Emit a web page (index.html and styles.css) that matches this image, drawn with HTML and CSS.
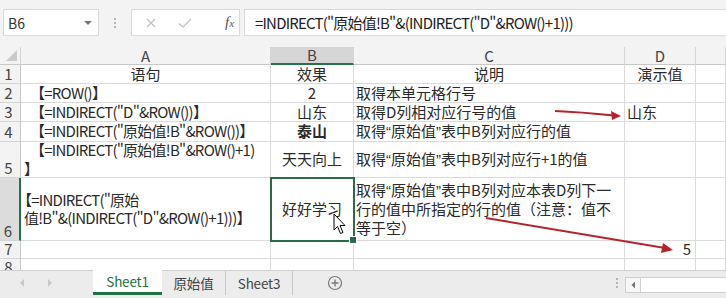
FILE: index.html
```html
<!DOCTYPE html>
<html lang="zh-CN">
<head>
    <meta charset="UTF-8">
    <meta name="viewport" content="width=device-width, initial-scale=1.0">
    <title>INDIRECT</title>

    <link rel="stylesheet" href="styles.css">

</head>

<body>

    <div class="app">

        <div class="toolbar">
            <div class="namebox">
                <span>B6</span>
                <span class="caret"></span>
            </div>
            <div class="grip"><i></i><i></i><i></i></div>
            <div class="fnbox">
                <svg class="ico" width="12" height="12" viewBox="0 0 12 12"><path d="M2 2 L10 10 M10 2 L2 10" stroke="#c4c4c4" stroke-width="1.4" fill="none"/></svg>
                <svg class="ico" width="16" height="12" viewBox="0 0 16 12"><path d="M2 6.5 L6 10 L14 2" stroke="#c4c4c4" stroke-width="1.4" fill="none"/></svg>
                <span class="fx">f<small>x</small></span>
            </div>
            <div class="formula">=INDIRECT("原始值!B"&amp;(INDIRECT("D"&amp;ROW()+1)))</div>
        </div>

        <div class="sheet">
            <!-- column headers -->
            <div class="hd corner"><span class="tri"></span></div>
            <div class="hd">A</div>
            <div class="hd on">B</div>
            <div class="hd">C</div>
            <div class="hd">D</div>
            <div class="hd"></div>

            <!-- row 1 -->
            <div class="rn">1</div>
            <div class="c mid">语句</div>
            <div class="c mid">效果</div>
            <div class="c mid">说明</div>
            <div class="c mid">演示值</div>
            <div class="c"></div>

            <!-- row 2 -->
            <div class="rn">2</div>
            <div class="c a"><span class="t">【=ROW()】</span></div>
            <div class="c mid">2</div>
            <div class="c">取得本单元格行号</div>
            <div class="c"></div>
            <div class="c"></div>

            <!-- row 3 -->
            <div class="rn">3</div>
            <div class="c a"><span class="t">【=INDIRECT("D"&amp;ROW())】</span></div>
            <div class="c mid">山东</div>
            <div class="c">取得D列相对应行号的值</div>
            <div class="c">山东</div>
            <div class="c"></div>

            <!-- row 4 -->
            <div class="rn">4</div>
            <div class="c a"><span class="t">【=INDIRECT("原始值!B"&amp;ROW())】</span></div>
            <div class="c mid bold">泰山</div>
            <div class="c"><span class="t">取得<span class="q">“</span>原始值<span class="q">”</span>表中B列对应行的值</span></div>
            <div class="c"></div>
            <div class="c"></div>

            <!-- row 5 -->
            <div class="rn">5</div>
            <div class="c a"><span class="t">【=INDIRECT("原始值!B"&amp;ROW()+1)<br>】</span></div>
            <div class="c mid">天天向上</div>
            <div class="c"><span class="t">取得<span class="q">“</span>原始值<span class="q">”</span>表中B列对应行+1的值</span></div>
            <div class="c"></div>
            <div class="c"></div>

            <!-- row 6 -->
            <div class="rn on">6</div>
            <div class="c a a6"><span class="t">【=INDIRECT("原始<br>值!B"&amp;(INDIRECT("D"&amp;ROW()+1)))】</span></div>
            <div class="c mid sel">好好学习</div>
            <div class="c"><span class="t">取得<span class="q">“</span>原始值<span class="q">”</span>表中B列对应本表D列下一<br>行的值中所指定的行的值（注意：值不<br>等于空）</span></div>
            <div class="c"></div>
            <div class="c"></div>

            <!-- row 7 -->
            <div class="rn">7</div>
            <div class="c"></div>
            <div class="c"></div>
            <div class="c"></div>
            <div class="c right">5</div>
            <div class="c"></div>

            <!-- row 8 -->
            <div class="rn">8</div>
            <div class="c"></div>
            <div class="c"></div>
            <div class="c"></div>
            <div class="c"></div>
            <div class="c"></div>
        </div>

        <div class="tabs">
            <div class="nav">
                <svg width="8" height="10" viewBox="0 0 8 10"><path d="M6 1 L2 5 L6 9 Z" fill="#c8c8c8"/></svg>
                <svg width="8" height="10" viewBox="0 0 8 10"><path d="M2 1 L6 5 L2 9 Z" fill="#c8c8c8"/></svg>
            </div>
            <div class="tab active">Sheet1</div>
            <div class="tab">原始值</div>
            <div class="tab">Sheet3</div>
            <div class="add">
                <svg width="16" height="16" viewBox="0 0 16 16"><circle cx="8" cy="8" r="6.5" stroke="#7a7a7a" stroke-width="1.2" fill="none"/><path d="M8 4.5 V11.5 M4.5 8 H11.5" stroke="#7a7a7a" stroke-width="1.4"/></svg>
            </div>
            <div class="spacer"></div>
            <div class="grip small"><i></i><i></i><i></i></div>
            <div class="hscroll">
                <div class="sbtn"><svg width="8" height="10" viewBox="0 0 8 10"><path d="M6 1.5 L2.5 5 L6 8.5 Z" fill="#777"/></svg></div>
                <div class="track"></div>
            </div>
        </div>

        <!-- hand drawn annotations -->
        <svg class="marks" width="726" height="298" viewBox="0 0 726 298">
            <path d="M555 111 Q580 112 614 115.5" stroke="#b5242b" stroke-width="2" fill="none"/>
            <path d="M621 116 L611 111 L612 120 Z" fill="#b5242b"/>
            <path d="M486 218 L665 248" stroke="#b5242b" stroke-width="2" fill="none"/>
            <path d="M673 250 L663 243 L661 253 Z" fill="#b5242b"/>
        </svg>

        <svg class="pointer" width="14" height="22" viewBox="0 0 14 22">
            <path d="M1 1 L1 17 L4.5 13.5 L7.5 20.5 L10 19.5 L7 12.5 L12 12.5 Z" fill="#fff" stroke="#000" stroke-width="1" stroke-linejoin="round"/>
        </svg>

    </div>

</body>

</html>
```

FILE: styles.css
```css
*, html {
    box-sizing: border-box;
    margin: 0;
    padding: 0;
}

body {
    width: 726px;
    height: 298px;
    overflow: hidden;
    background: #fff;
    font-family: "Noto Sans CJK SC", sans-serif;
    font-size: 15px;
    color: #2a2a2a;
}

.app {
    position: relative;
    width: 726px;
    height: 298px;
    display: flex;
    flex-direction: column;
}

/* formula bar */
.toolbar {
    height: 47px;
    flex: none;
    display: flex;
    align-items: flex-start;
    padding-top: 9px;
    background: #f3f3f3;
}

.namebox {
    margin-left: 3px;
    width: 96px;
    height: 27px;
    background: #fff;
    border: 1px solid #d9d9d9;
    display: flex;
    align-items: center;
    justify-content: space-between;
    padding: 0 6px 0 4px;
    font-size: 14px;
    color: #333;
}

.caret {
    width: 0;
    height: 0;
    border-left: 4px solid transparent;
    border-right: 4px solid transparent;
    border-top: 4px solid #777;
}

.grip {
    width: 32px;
    height: 27px;
    display: flex;
    flex-direction: column;
    align-items: center;
    justify-content: center;
    gap: 2px;
}

.grip i {
    display: block;
    width: 2px;
    height: 2px;
    background: #b5b5b5;
}

.fnbox {
    width: 109px;
    height: 27px;
    background: #fff;
    border: 1px solid #d9d9d9;
    display: flex;
    align-items: center;
    padding-left: 13px;
    gap: 20px;
}

.fx {
    margin-left: 12px;
    font-family: "Liberation Serif", serif;
    font-style: italic;
    font-size: 15px;
    color: #555;
}

.fx small {
    font-size: 11px;
}

.formula {
    margin-left: 4px;
    flex: 1;
    height: 27px;
    background: #fff;
    border: 1px solid #d9d9d9;
    border-right: none;
    padding-left: 10px;
    line-height: 25px;
    letter-spacing: -0.8px;
    color: #222;
    white-space: nowrap;
}

/* grid */
.sheet {
    flex: 1;
    overflow: hidden;
    display: grid;
    grid-template-columns: 21px 250px 83px 271px 71px 30px;
    grid-template-rows: 18px 19px 19px 19px 20px 36px 63px 18px 18px;
    align-content: start;
}

.hd {
    background: #f3f3f3;
    border-right: 1px solid #d4d4d4;
    border-bottom: 1px solid #c8c8c8;
    display: flex;
    align-items: center;
    justify-content: center;
    line-height: 16px;
    color: #444;
}

.hd.on {
    background: #d6d6d6;
    border-bottom: 2px solid #217346;
}

.corner {
    position: relative;
    background: #f3f3f3;
}

.tri {
    position: absolute;
    right: 3px;
    bottom: 3px;
    width: 0;
    height: 0;
    border-left: 11px solid transparent;
    border-bottom: 11px solid #c9c9c9;
}

.rn {
    background: #f3f3f3;
    border-right: 1px solid #c8c8c8;
    border-bottom: 1px solid #d4d4d4;
    display: flex;
    align-items: flex-end;
    justify-content: center;
    padding-right: 3px;
    line-height: 18px;
    color: #444;
}

.rn.on {
    background: #dcdcdc;
    border-right: 2px solid #217346;
}

.c {
    border-right: 1px solid #dadada;
    border-bottom: 1px solid #dadada;
    display: flex;
    align-items: center;
    padding-left: 2px;
    white-space: nowrap;
    line-height: 18.5px;
}

.t {
    display: block;
}

.a {
    padding-left: 3px;
    letter-spacing: -0.75px;
}

.a .t {
    text-indent: 6px;
}

.a6 .t {
    text-indent: -7px;
}

.mid {
    justify-content: center;
    padding-left: 0;
}

.right {
    justify-content: flex-end;
    padding-right: 4px;
}

.bold {
    font-weight: bold;
}

.q {
    font-family: "Liberation Sans", sans-serif;
}

.sel {
    position: relative;
    z-index: 1;
    outline: 2px solid #2c6a4c;
    outline-offset: -1px;
}

.sel::after {
    content: "";
    position: absolute;
    right: -4px;
    bottom: -4px;
    width: 6px;
    height: 6px;
    background: #2c6a4c;
    border: 1px solid #fff;
}

/* sheet tabs */
.tabs {
    height: 28px;
    flex: none;
    display: flex;
    align-items: flex-start;
    background: #ececec;
    border-top: 1px solid #d0d0d0;
    font-size: 13.5px;
}

.nav {
    width: 93px;
    height: 24px;
    display: flex;
    align-items: center;
    padding-left: 18px;
    gap: 20px;
}

.tab {
    height: 24px;
    display: flex;
    align-items: center;
    justify-content: center;
    color: #444;
    border-right: 1px solid #c8c8c8;
    letter-spacing: -0.2px;
    line-height: 18px;
}

.tab:nth-child(3) {
    width: 64px;
}

.tab:nth-child(4) {
    width: 67px;
}

.tab.active {
    width: 69px;
    background: #fff;
    color: #217346;
    border-right: none;
    border-bottom: 3px solid #217346;
    height: 25px;
    margin-top: -1px;
}

.add {
    margin-left: 34px;
    height: 24px;
    display: flex;
    align-items: center;
}

.spacer {
    flex: 1;
}

.grip.small {
    width: 16px;
    height: 24px;
}

.hscroll {
    width: 101px;
    height: 16px;
    margin-top: 6px;
    display: flex;
    border: 1px solid #cfcfcf;
    border-right: none;
    background: #fff;
}

.sbtn {
    width: 15px;
    display: flex;
    align-items: center;
    justify-content: center;
    border-right: 1px solid #cfcfcf;
    background: #f7f7f7;
}

.track {
    flex: 1;
}

/* annotations */
.marks {
    position: absolute;
    left: 0;
    top: 0;
    pointer-events: none;
}

.pointer {
    position: absolute;
    left: 333px;
    top: 213px;
    z-index: 3;
}
```
